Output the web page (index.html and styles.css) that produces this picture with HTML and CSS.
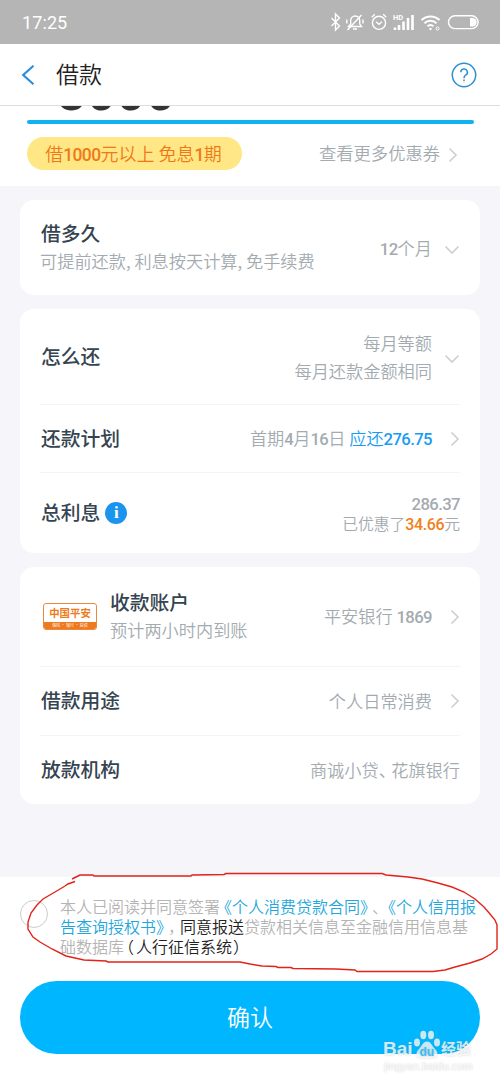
FILE: index.html
```html
<!DOCTYPE html>
<html lang="zh-CN">

<head>
    <meta charset="UTF-8">
    <meta name="viewport" content="width=device-width, initial-scale=1.0">
    <title>借款</title>
    <link rel="stylesheet" href="styles.css">
</head>

<body>
    <div class="status-bar">
        <span class="time">17:25</span>
        <svg class="status-icons" width="152" height="20" viewBox="0 0 152 20" fill="none" stroke="#fff" stroke-width="1.4">
            <!-- bluetooth -->
            <path d="M1.500 6l8 8-4 4V2l4 4-8 8" />
            <!-- muted bell -->
            <path d="M18.500 14.500h13l-1.800-2.600V8.500a4.500 4.500 0 0 0-9 0v3.400zM23 17h4M31.500 3L17.500 18M16.800 7.500v4M33 7.500v4" />
            <!-- alarm -->
            <circle cx="49" cy="10.800" r="6.600" />
            <path d="M46 9.800l3 2.500 3-2.500M41.800 5.300l3-3M56.200 5.300l-3-3" />
            <!-- signal -->
            <path d="M65 18v-2.500M69 18v-5M73.500 18V9.500M78 18V6M82.500 18V3" stroke-width="2.600" />
            <text x="63" y="8" class="hd">HD</text>
            <!-- wifi -->
            <path d="M91.500 8a13 13 0 0 1 18 0M94.500 11.300a8.600 8.600 0 0 1 12 0M97.500 14.300a4.500 4.500 0 0 1 6 0" stroke-width="2" />
            <circle cx="100.500" cy="17" r="1.200" fill="#fff" stroke="none" />
            <circle cx="107.500" cy="16.500" r="1.500" stroke-width="1" />
            <!-- battery -->
            <rect x="118.500" y="3.800" width="29.600" height="12.800" rx="6.400" />
            <path d="M140 6h2.500a4.200 4.200 0 0 1 0 8.400H140z" fill="#fff" stroke="none" />
        </svg>
    </div>

    <div class="nav">
        <svg class="back" width="14" height="20" viewBox="0 0 14 20">
            <path d="M12.500 .8L2.200 10l10.300 9.200" fill="none" stroke="#2b8fdd" stroke-width="2.200" />
        </svg>
        <h1>借款</h1>
        <svg class="help" width="26" height="26" viewBox="0 0 26 26" fill="none" stroke="#2b8fd0" stroke-width="1.500">
            <circle cx="13" cy="13" r="11.700" />
            <path d="M9.800 10.300a3.300 3.300 0 1 1 4.800 2.900q-1.600.9-1.600 3" />
            <path d="M13 17.600v1.700" />
        </svg>
    </div>

    <div class="amount-section">
        <div class="amount-clip">
            <div class="amount"><span class="yen">¥</span>3000</div>
        </div>
        <div class="amount-line"></div>
        <div class="coupon-row">
            <span class="coupon">借<b>1000</b>元以上 免息<b>1</b>期</span>
            <span class="more">查看更多优惠券</span>
            <svg class="arrow" width="10" height="16" viewBox="0 0 10 16"><path d="M1.500 1.500L8 8l-6.500 6.500" /></svg>
        </div>
    </div>

    <div class="cards">
        <div class="card">
            <div class="row duration">
                <div class="title">
                    <div class="label">借多久</div>
                    <div class="desc">可提前还款, 利息按天计算, 免手续费</div>
                </div>
                <div class="value"><b>12</b>个月</div>
                <svg class="arrow down" width="16" height="10" viewBox="0 0 16 10"><path d="M1.500 1.500L8 8l6.500-6.500" /></svg>
            </div>
        </div>

        <div class="card">
            <div class="row method">
                <div class="label">怎么还</div>
                <div class="value">每月等额<br>每月还款金额相同</div>
                <svg class="arrow down" width="16" height="10" viewBox="0 0 16 10"><path d="M1.500 1.500L8 8l6.500-6.500" /></svg>
            </div>
            <div class="row plan">
                <div class="label">还款计划</div>
                <div class="value">首期<b>4</b>月<b>16</b>日 <span class="blue">应还<b>276.75</b></span></div>
                <svg class="arrow" width="10" height="16" viewBox="0 0 10 16"><path d="M1.500 1.500L8 8l-6.500 6.500" /></svg>
            </div>
            <div class="row interest">
                <div class="label">总利息</div>
                <span class="info">i</span>
                <div class="value"><b>286.37</b><div class="saved">已优惠了<b class="orange">34.66</b>元</div></div>
            </div>
        </div>

        <div class="card">
            <div class="row account">
                <div class="bank">
                    <div class="bank-name">中国平安</div>
                    <div class="bank-sub">保险 · 银行 · 投资</div>
                </div>
                <div class="title">
                    <div class="label">收款账户</div>
                    <div class="desc">预计两小时内到账</div>
                </div>
                <div class="value">平安银行 <b>1869</b></div>
                <svg class="arrow" width="10" height="16" viewBox="0 0 10 16"><path d="M1.500 1.500L8 8l-6.500 6.500" /></svg>
            </div>
            <div class="row usage">
                <div class="label">借款用途</div>
                <div class="value">个人日常消费</div>
                <svg class="arrow" width="10" height="16" viewBox="0 0 10 16"><path d="M1.500 1.500L8 8l-6.500 6.500" /></svg>
            </div>
            <div class="row lender">
                <div class="label">放款机构</div>
                <div class="value">商诚小贷<span class="pr">、</span>花旗银行</div>
            </div>
        </div>
    </div>

    <div class="footer">
        <div class="agreement">
            <span class="radio"></span>
            <p class="terms">本人已阅读并同意签署<a><span class="pl">《</span>个人消费贷款合同<span class="pr">》</span></a><span class="pr">、</span><a><span class="pl">《</span>个人信用报<br>告查询授权书<span class="pr">》</span></a><span class="pr">，</span><em>同意报送</em>贷款相关信息至金融信用信息基<br>础数据库<em><span class="paren-l">（</span>人行征信系统<span class="paren-r">）</span></em></p>
        </div>
        <button class="confirm">确认</button>

        <!-- hand-drawn mark round the terms -->
        <svg class="mark" width="500" height="110" viewBox="0 867 500 110">
            <path d="M72 879L76 877L80 875H93L94 876H191L192 875L224 874.500L226 873.500H382L386 875L408 877L422 879L438 883L452 887L464 892L475 899L484 907L490 914L495 920L497 925V949L491 954L482 959L470 963L455 967L445 970L433 971.500H357L355 970L336 969L293 968.500L291 967.500L278 967.500L276 966.500L262 966L250 964L240 962H108L106 961L84 960L66 956L52 949L40 942L33 937L28 929V922L31 913L37 905L43 899L55 892L65 886L68 884L75 881.500" />
        </svg>

        <div class="watermark">
            <div class="brand">
                <span class="bai">Bai</span>
                <svg class="paw" width="28" height="30" viewBox="0 0 28 30">
                    <ellipse cx="4" cy="12.500" rx="3" ry="4" />
                    <ellipse cx="10.300" cy="5" rx="3" ry="4.200" />
                    <ellipse cx="18" cy="5" rx="3" ry="4.200" />
                    <ellipse cx="24" cy="12.500" rx="3" ry="4" />
                    <path d="M14 11.500c4 0 5 4.500 8 7.500 5 5 1.500 9.500-3 9H9c-5 .5-8-4-3-9 3-3 4-7.500 8-7.500z" />
                    <text x="14" y="25.500">du</text>
                </svg>
                <span class="jy">经验</span>
            </div>
            <div class="site">jingyan.baidu.com</div>
        </div>
    </div>
</body>

</html>
```
FILE: styles.css
```css
* {
    margin: 0;
    padding: 0;
    box-sizing: border-box;
}

body {
    width: 500px;
    height: 1084px;
    overflow: hidden;
    display: flex;
    flex-direction: column;
    background: #f5f5fa;
    font-family: 'Noto Sans CJK SC', sans-serif;
    font-weight: 350;
    text-spacing-trim: space-all;
    white-space: nowrap;
}

b {
    font-family: 'Roboto', sans-serif;
    font-size: 0.97em;
    font-weight: 500;
    letter-spacing: -0.6px;
}

/* status bar */
.status-bar {
    height: 44px;
    background: #b5b5b5;
    display: flex;
    align-items: center;
    justify-content: space-between;
    padding: 0 18px 0 22px;
}

.time {
    color: #fff;
    font-family: 'Roboto', sans-serif;
    font-weight: 400;
    font-size: 18px;
    letter-spacing: 0.1px;
}

.hd {
    font: 700 7.5px 'Roboto', sans-serif;
    fill: #fff;
    stroke: none;
}

/* title bar */
.nav {
    height: 62px;
    background: #fff;
    border-bottom: 1px solid #dedede;
    display: flex;
    align-items: center;
    padding: 0 23px 0 21px;
}

.nav h1 {
    margin: -3px 0 0 21px;
    color: #222;
    font-size: 23px;
    font-weight: 350;
    line-height: 30px;
}

.help {
    margin-left: auto;
}

/* amount */
.amount-section {
    height: 80px;
    background: #fff;
    padding: 0 26px 0 27px;
}

.amount-clip {
    height: 14px;
    overflow: hidden;
    display: flex;
    align-items: flex-end;
}

.amount {
    color: #333;
    font: 500 52px/52px 'Roboto', sans-serif;
    margin-bottom: 1px;
    padding-left: 7px;
}

.yen {
    display: inline-block;
    width: 23px;
    font-size: 18px;
    line-height: 18px;
    vertical-align: 4px;
    color: #2b6c8c;
}

.amount-line {
    height: 4px;
    border-radius: 2px;
    background: #10b2f2;
}

.coupon-row {
    display: flex;
    align-items: center;
    margin-top: 13px;
    padding-right: 16px;
}

.coupon {
    width: 215px;
    height: 33px;
    line-height: 32px;
    padding-right: 2px;
    border-radius: 17px;
    background: #ffe785;
    color: #f07818;
    text-align: center;
    font-size: 18px;
}

.more {
    margin: -2px 0 0 auto;
    color: #a3abb0;
    font-size: 17.3px;
}

.arrow {
    flex: none;
    margin: 3px 0 0 8px;
    fill: none;
    stroke: #cdd0d4;
    stroke-width: 1.7;
}

/* cards */
.cards {
    height: 691px;
    padding: 14px 20px 0;
    display: flex;
    flex-direction: column;
    gap: 14px;
}

.card {
    background: #fff;
    border-radius: 14px;
    padding: 0 20px;
}

.row {
    display: flex;
    align-items: center;
    border-bottom: 1px solid #f3f4f5;
}

.row:last-child {
    border-bottom: none;
}

.duration {
    height: 95px;
}

.duration .value {
    padding-top: 2px;
}

.method {
    height: 96px;
}

.plan {
    height: 68px;
}

.plan .value {
    padding-top: 1px;
}

.interest {
    height: 80px;
}

.account {
    height: 100px;
}

.usage {
    height: 69px;
}

.lender {
    height: 68px;
}

.label {
    margin: -2px 0 0 1px;
    color: #354450;
    font-size: 19.8px;
    font-weight: 500;
    line-height: 28px;
}

.desc {
    color: #a3abb0;
    font-size: 17.2px;
    line-height: 28px;
}

.value {
    margin-left: auto;
    color: #a3abb0;
    font-size: 17.2px;
    line-height: 28px;
    text-align: right;
}

.row .arrow {
    margin: 0 0 0 18px;
}

.row .arrow.down {
    margin: 4px 0 0 12px;
}

.blue {
    color: #189df0;
}

.orange {
    color: #f08020;
}

.info {
    width: 22px;
    height: 22px;
    margin-left: 5px;
    border-radius: 50%;
    background: #1b94ee;
    color: #fff;
    text-align: center;
    font: bold 17px/21px 'Liberation Serif', serif;
}

.interest .value {
    line-height: 19px;
}

.saved {
    font-size: 15.8px;
}

.saved b {
    font-size: 16px;
    letter-spacing: -0.4px;
}

.bank {
    width: 54px;
    height: 27px;
    margin: 0 13px 0 3px;
    border: 1px solid #ee8840;
    border-radius: 3px;
    color: #ee7a20;
    text-align: center;
    overflow: hidden;
}

.account .label {
    margin-left: 0;
}

.bank-name {
    height: 18px;
    font-size: 10.4px;
    font-weight: 700;
    line-height: 18px;
}

.bank-sub {
    height: 8px;
    background: #ee7a20;
    color: #fff;
    font-size: 4px;
    line-height: 7px;
}

/* footer */
.footer {
    position: relative;
    flex: 1;
    background: #fff;
    padding: 20px;
}

.agreement {
    display: flex;
    height: 84px;
}

.radio {
    width: 28px;
    height: 28px;
    margin: 3px 12px 0 0;
    border: 1.5px solid #ccc;
    border-radius: 50%;
}

.terms {
    margin-top: -1px;
    color: #b4b4b4;
    font-size: 16px;
    line-height: 20px;
}

.terms a {
    color: #22a7dc;
}

.terms em {
    color: #222;
    font-style: normal;
}

/* half-width punctuation with a little air on its open side */
.pl,
.pr,
.paren-l,
.paren-r {
    font-feature-settings: 'halt';
}

.pl {
    margin-left: 4px;
}

.pr {
    margin-right: 4px;
}

.paren-l {
    margin: 0 2px;
}

.paren-r {
    margin-left: 1px;
}

.confirm {
    display: block;
    width: 460px;
    height: 73px;
    padding-bottom: 3px;
    border: none;
    border-radius: 37px;
    background: #00b7ff;
    color: #fff;
    font-family: inherit;
    font-size: 23px;
    font-weight: 350;
}

.mark {
    position: absolute;
    top: -10px;
    left: 0;
    fill: none;
    stroke: #e2231a;
    stroke-width: 1.4;
}

.watermark {
    position: absolute;
    left: 383px;
    top: 153px;
    color: rgba(255, 255, 255, 0.8);
    text-shadow: 0 0 2px rgba(120, 120, 120, 0.4);
}

.brand {
    display: flex;
    align-items: flex-end;
    height: 30px;
}

.bai {
    width: 30px;
    font: bold 19px/22px 'Liberation Sans', sans-serif;
}

.paw {
    fill: rgba(255, 255, 255, 0.75);
    filter: drop-shadow(0 0 1px rgba(120, 120, 120, 0.4));
}

.paw text {
    font: bold 12px 'Liberation Sans', sans-serif;
    text-anchor: middle;
    fill: #3cbcf5;
}

.jy {
    font-size: 15px;
    font-weight: 700;
    line-height: 24px;
}

.site {
    margin-left: 1px;
    font: 11px/13px 'Liberation Sans', sans-serif;
}
```
